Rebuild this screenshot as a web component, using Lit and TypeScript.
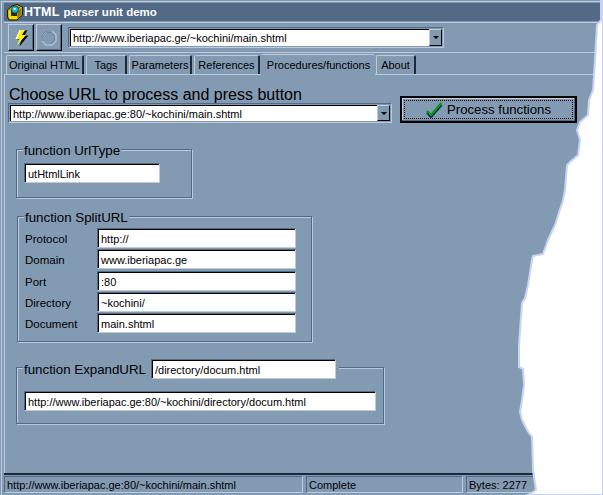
import { LitElement, html, css } from "lit";
import { customElement } from "lit/decorators.js";

const TABS = [
  { label: "Original HTML", cls: "t1" },
  { label: "Tags", cls: "t2" },
  { label: "Parameters", cls: "t3" },
  { label: "References", cls: "t4" },
  { label: "Procedures/functions", cls: "t5 active" },
  { label: "About", cls: "t6" },
];
const FIELDS = [
  ["Protocol", "http://"],
  ["Domain", "www.iberiapac.ge"],
  ["Port", ":80"],
  ["Directory", "~kochini/"],
  ["Document", "main.shtml"],
];
const TORN =
  "603,0 601,0 601,20 597,25 595,60 593,90 589,100 588,115 580,122 577,130 580,140 578,155 570,162 567,165 565,190 563,200 555,225 548,240 543,254 533,256 532,260 528,285 525,298 522,303 519,345 519,367 523,369 524,385 522,400 520,412 522,420 527,430 532,437 533,470 536,490 528,495 603,495";

@customElement("app-root")
export class AppRoot extends LitElement {
  static styles = css`
    :host {
      display: block;
      position: relative;
      width: 603px;
      height: 495px;
      overflow: hidden;
      background: #839ab3;
      font: 11px "Liberation Sans", Arial, sans-serif;
      color: #000;
    }
    .frame {
      box-sizing: border-box;
      height: 494px;
      margin: 1px 0 0 1px;
      border-left: 1px solid #bccad9;
      border-top: 1px solid #bccad9;
      padding: 1px 0 0 2px;
      display: flex;
      flex-direction: column;
    }
    .title {
      height: 18px;
      flex: none;
      background: #526a85;
      color: #fff;
      display: flex;
      align-items: center;
      gap: 0;
      padding-left: 2px;
      font: bold 11.5px "Liberation Sans", sans-serif;
      white-space: nowrap;
    }
    .title b {
      font-size: 12.5px;
      letter-spacing: 0.2px;
      margin-right: 4px;
    }
    .toolbar {
      height: 31px;
      flex: none;
      box-sizing: border-box;
      margin-top: 1px;
      border-top: 1px solid #bccad9;
      border-bottom: 1px solid #bccad9;
      display: flex;
      align-items: flex-start;
      padding: 1px 0 0 4px;
      gap: 2px;
    }
    .tool {
      box-sizing: border-box;
      width: 26px;
      height: 27px;
      border: 1px solid;
      border-color: #bccad9 #000 #000 #bccad9;
      box-shadow: inset -1px -1px 0 #526a85;
      display: flex;
      align-items: center;
      justify-content: center;
    }
    .combo {
      box-sizing: border-box;
      display: flex;
      border: 1px solid;
      border-color: #526a85 #bccad9 #bccad9 #526a85;
      padding: 1px;
    }
    .combo .well {
      flex: 1;
      display: flex;
      align-items: center;
      background: #fff;
      padding-left: 2px;
      border-top: 1px solid #000;
      border-left: 1px solid #000;
      white-space: nowrap;
    }
    .combo .drop {
      flex: none;
      width: 13px;
      background: #839ab3;
      box-sizing: border-box;
      border: 1px solid;
      border-color: #bccad9 #000 #000 #bccad9;
      display: flex;
      align-items: center;
      justify-content: center;
    }
    .drop i {
      width: 0;
      height: 0;
      border: 3px solid transparent;
      border-top: 3px solid #000;
      border-bottom: 0;
    }
    .top-combo {
      width: 376px;
      height: 21px;
      margin: 3px 0 0 4px;
    }
    .tabs {
      height: 20px;
      flex: none;
      display: flex;
      align-items: flex-end;
      padding-left: 2px;
      margin-top: 1px;
      gap: 2px;
      position: relative;
      z-index: 1;
    }
    .tab {
      box-sizing: border-box;
      height: 19px;
      border: 1px solid #bccad9;
      border-bottom: 0;
      border-right: 2px solid #1d2a3a;
      border-radius: 2px 2px 0 0;
      display: flex;
      align-items: center;
      justify-content: center;
      white-space: nowrap;
    }
    .t1 { width: 78px; }
    .t2 { width: 41px; }
    .t3 { width: 63px; }
    .t4 { width: 66px; }
    .t5 { width: 114px; margin-left: -1px; margin-right: -1px; }
    .t6 { width: 40px; }
    .tab.active {
      height: 21px;
      border-right: 0;
      border-left-color: transparent;
      background: #839ab3;
      margin-bottom: -1px;
    }
    .page {
      flex: 1;
      border-top: 1px solid #bccad9;
      border-left: 1px solid #bccad9;
      padding: 0 0 0 4px;
      display: flex;
      flex-direction: column;
      align-items: flex-start;
    }
    .chooser {
      display: flex;
      align-items: flex-end;
      gap: 8px;
      margin-top: 8px;
      margin-left: -1px;
    }
    .choose-label {
      font-size: 16px;
      line-height: 20px;
      margin-left: 1px;
      padding-top: 2px;
      margin-bottom: -2px;
      white-space: nowrap;
    }
    .url-combo {
      width: 384px;
      height: 20px;
      margin-top: 0;
    }
    .process {
      box-sizing: border-box;
      width: 177px;
      height: 27px;
      border: 2px solid #000;
      box-shadow: inset -1px -1px 0 #526a85, inset 1px 1px 0 #bccad9;
      padding: 2px;
    }
    .process div {
      box-sizing: border-box;
      height: 100%;
      border: 1px dotted #000;
      display: flex;
      align-items: center;
      justify-content: center;
      gap: 4px;
      font-size: 13.2px;
    }
    .group {
      box-sizing: border-box;
      border: 1px solid #526a85;
      box-shadow: 1px 1px 0 #bccad9, inset 1px 1px 0 #bccad9;
    }
    .legend {
      display: flex;
      width: fit-content;
      align-items: center;
      background: #839ab3;
      font-size: 13.3px;
      white-space: nowrap;
      margin-left: 6px;
      padding: 0 1px;
      position: relative;
    }
    .edit {
      box-sizing: border-box;
      height: 20px;
      background: #fff;
      border: 1px solid;
      border-color: #526a85 #bccad9 #bccad9 #526a85;
      box-shadow: inset 1px 1px 0 #000;
      display: flex;
      align-items: center;
      padding: 2px 0 0 3px;
      white-space: nowrap;
      font-size: 11px;
    }
    .g1 {
      width: 176px;
      height: 49px;
      margin: 26px 0 0 7px;
    }
    .g1 .legend { height: 16px; margin-top: -8px; }
    .g1 .edit { width: 136px; margin: 5px 0 0 7px; }
    .g2 {
      width: 295px;
      height: 126px;
      margin: 18px 0 0 8px;
    }
    .g2 .legend { height: 16px; margin-top: -8px; }
    .grid {
      display: grid;
      grid-template-columns: 72px 199px;
      grid-auto-rows: 20px;
      row-gap: 1.25px;
      margin: 3px 0 0 7px;
      align-items: center;
      font-size: 11.5px;
    }
    .grid span { padding-top: 2px; }
    .g3 {
      width: 368px;
      height: 57px;
      margin: 25px 0 0 7px;
    }
    .g3 .legend { margin-top: -9px; height: 20px; gap: 5px; padding-right: 3px; }
    .g3 .e-top { width: 185px; }
    .g3 .e-bot { width: 352px; margin: 12px 0 0 7px; }
    .status {
      height: 21px;
      flex: none;
      box-sizing: border-box;
      border-top: 2px solid #1d2a3a;
      display: flex;
      gap: 3px;
      padding: 1px 0 0 0;
      margin-bottom: 1px;
    }
    .panel {
      box-sizing: border-box;
      height: 17px;
      border: 1px solid;
      border-color: #526a85 #bccad9 #bccad9 #526a85;
      display: flex;
      align-items: center;
      padding-left: 2px;
      white-space: nowrap;
    }
    .p1 { width: 299px; }
    .p2 { width: 157px; }
    .p3 { flex: 1; }
    .torn {
      position: absolute;
      inset: 0;
      width: 603px;
      height: 495px;
      pointer-events: none;
    }
  `;

  render() {
    return html`
      <div class="frame">
        <div class="title">
          <svg width="18" height="17" viewBox="0 0 18 17">
            <path d="M1.5 6 L6 2 L11 0.5 L16.5 3 V11 L11 16 H3 L1.5 13 Z" fill="#d8b400" stroke="#1a1a00" />
            <path d="M2.5 7 H11 V15 H3.5 Z" fill="#f0dc10" />
            <path d="M5 7 L8 3 H14.5 L11 7 Z" fill="#7a6a00" />
            <path d="M11.5 7.5 L15.5 4 V10.5 L11.5 14.5 Z" fill="#8f7c00" />
            <rect x="5" y="6" width="6" height="6" fill="#2a2a10" />
            <circle cx="9" cy="5.5" r="3.6" fill="#18b8d8" stroke="#063a58" stroke-width=".8" />
            <path d="M7.5 4h2.5v1.6h-2.5z" fill="#c8f8f8" />
          </svg>
          <span><b>HTML</b>parser unit demo</span>
        </div>
        <div class="toolbar">
          <div class="tool">
            <svg width="16" height="18" viewBox="0 0 16 18">
              <path d="M7 1 H13 L10 6 H14 L5 17 L7 10 H3 Z" fill="#000" transform="translate(1.4,0.4)" />
              <path d="M6.5 1 H12 L9 6 H13 L4 16.5 L6.5 10 H2.5 Z" fill="#fff200" />
              <path d="M6.5 1 L2.5 10 H4 L7.5 1 Z" fill="#fffbe0" />
            </svg>
          </div>
          <div class="tool">
            <svg width="16" height="16" viewBox="0 0 16 16">
              <path d="M5 1 H11 L15 5 V11 L11 15 H5 L1 11 V5 Z" fill="none" stroke="#aebfd1" stroke-width="1.4" />
              <path d="M1 11 V5 L5 1 H11" fill="none" stroke="#5f7690" stroke-width="1" />
              <path d="M5.6 2.6 H10.4 L13.4 5.6 V10.4 L10.4 13.4" fill="none" stroke="#5f7690" stroke-width=".7" />
            </svg>
          </div>
          <div class="combo top-combo">
            <div class="well">http://www.iberiapac.ge/~kochini/main.shtml</div>
            <div class="drop"><i></i></div>
          </div>
        </div>
        <div class="tabs">
          ${TABS.map((t) => html`<div class="tab ${t.cls}">${t.label}</div>`)}
        </div>
        <div class="page">
          <div class="chooser">
            <div>
              <div class="choose-label">Choose URL to process and press button</div>
              <div class="combo url-combo">
                <div class="well">http://www.iberiapac.ge:80/~kochini/main.shtml</div>
                <div class="drop"><i></i></div>
              </div>
            </div>
            <div class="process">
              <div>
                <svg width="17" height="16" viewBox="0 0 17 16">
                  <path d="M1 9.5 L5 14 L15.5 2" fill="none" stroke="#0a1f70" stroke-width="2.2" transform="translate(0,1)" />
                  <path d="M1 9 L5 13 L15.5 1" fill="none" stroke="#0a9a10" stroke-width="2.4" />
                </svg>
                <span>Process functions</span>
              </div>
            </div>
          </div>
          <div class="group g1">
            <div class="legend">function UrlType</div>
            <div class="edit">utHtmlLink</div>
          </div>
          <div class="group g2">
            <div class="legend">function SplitURL</div>
            <div class="grid">
              ${FIELDS.map(
                ([k, v]) => html`<span>${k}</span><div class="edit">${v}</div>`
              )}
            </div>
          </div>
          <div class="group g3">
            <div class="legend">
              function ExpandURL
              <div class="edit e-top">/directory/docum.html</div>
            </div>
            <div class="edit e-bot">http://www.iberiapac.ge:80/~kochini/directory/docum.html</div>
          </div>
        </div>
        <div class="status">
          <div class="panel p1">http://www.iberiapac.ge:80/~kochini/main.shtml</div>
          <div class="panel p2">Complete</div>
          <div class="panel p3">Bytes: 2277</div>
        </div>
      </div>
      <svg class="torn" viewBox="0 0 603 495">
        <polygon points="${TORN}" fill="#fff" stroke="#c9d2f2" stroke-width="2" />
      </svg>
    `;
  }
}
